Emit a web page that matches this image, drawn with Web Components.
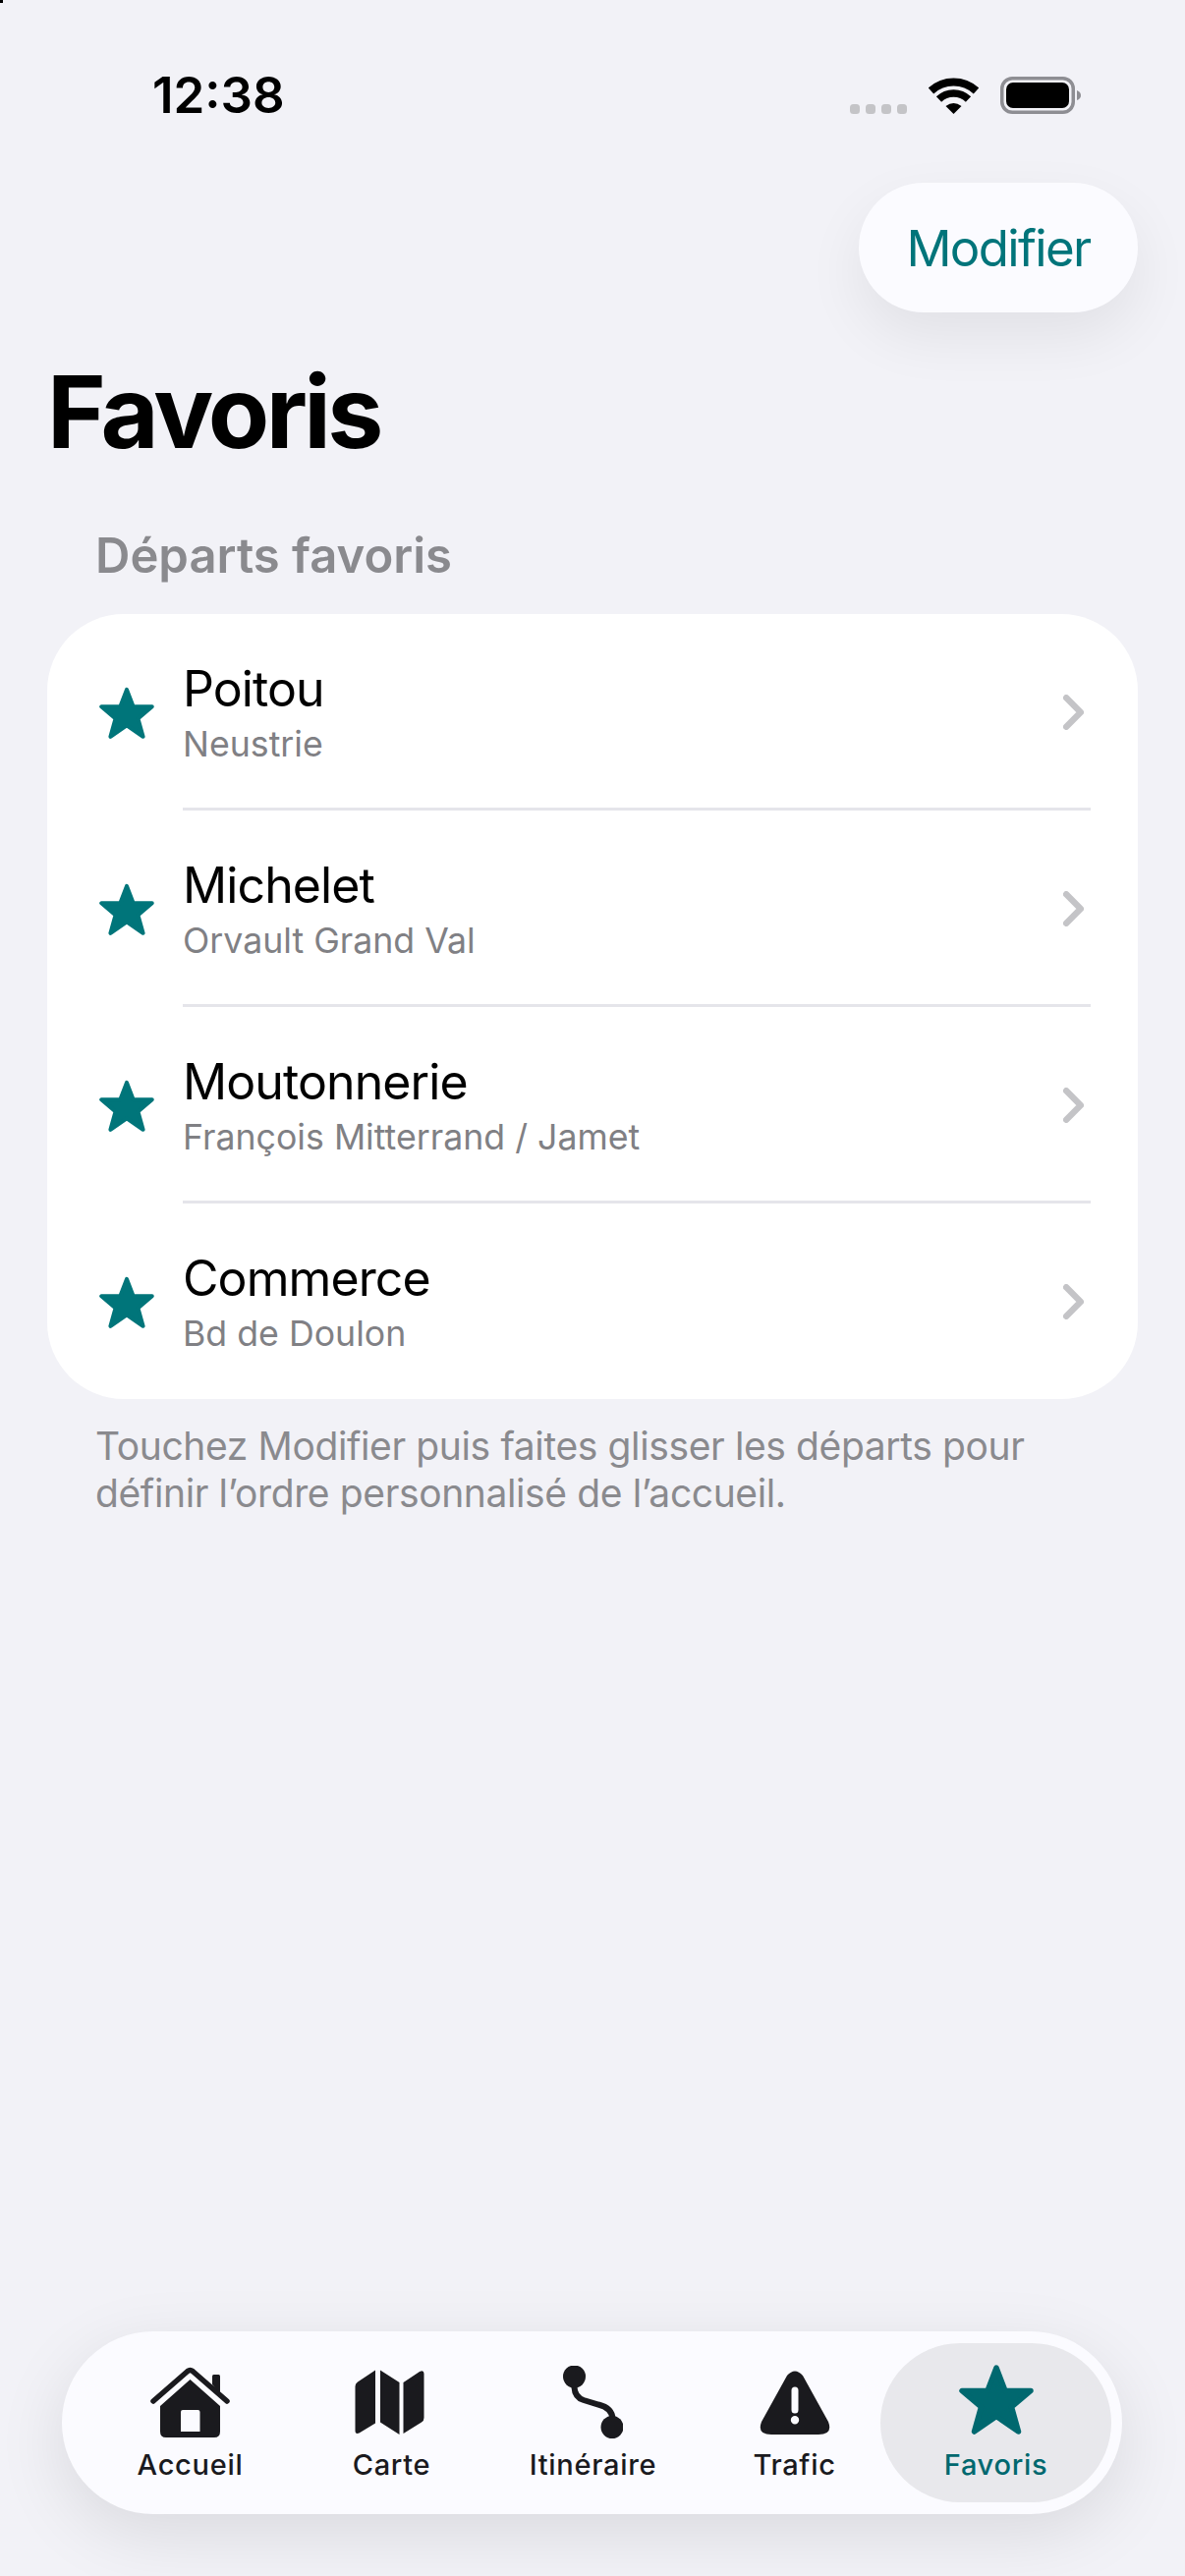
<!DOCTYPE html>
<html lang="fr">
<head>
<meta charset="utf-8">
<title>Favoris</title>
<style>
    html, body {
        margin: 0;
        padding: 0;
    }

    body {
        background-color: #f2f2f7;
        font-family: Inter, "Liberation Sans", sans-serif;
    }
</style>
</head>
<body>
<favorites-screen>
    <status-bar time="12:38"></status-bar>
    <nav-button>Modifier</nav-button>
    <large-title>Favoris</large-title>
    <section-header>Départs favoris</section-header>
    <favorites-list>
        <favorite-row>Poitou<span slot="sub">Neustrie</span></favorite-row>
        <favorite-row>Michelet<span slot="sub">Orvault Grand Val</span></favorite-row>
        <favorite-row>Moutonnerie<span slot="sub">François Mitterrand / Jamet</span></favorite-row>
        <favorite-row>Commerce<span slot="sub">Bd de Doulon</span></favorite-row>
    </favorites-list>
    <section-footer>Touchez Modifier puis faites glisser les départs pour définir l’ordre personnalisé de l’accueil.</section-footer>
    <tab-bar>
        <tab-item icon="home">Accueil</tab-item>
        <tab-item icon="map">Carte</tab-item>
        <tab-item icon="route">Itinéraire</tab-item>
        <tab-item icon="warning">Trafic</tab-item>
        <tab-item icon="star" active>Favoris</tab-item>
    </tab-bar>
</favorites-screen>

<script>
const STAR_POINTS = '38,4 47,27.5 73,27.5 53.5,44 60.5,69 38,53.5 15.5,69 22.5,44 3,27.5 29,27.5';

// map and star carry spare room so they sit off-centre like the originals
const ICONS = {
    home: `<svg width="81" height="72" viewBox="0 0 81 72">
        <path d="M3 35 L38 4.5 Q40.5 2.5 43 4.5 L78 35" fill="none" stroke="currentColor" stroke-width="5.5" stroke-linecap="round" stroke-linejoin="round"/>
        <path d="M63 18 V9.5 Q63 8 64.5 8 H69.5 Q71 8 71 9.5 V28 Z" fill="currentColor"/>
        <path fill-rule="evenodd" fill="currentColor" d="M40.5 13 L71 40 V66 Q71 72 65 72 H16 Q10 72 10 66 V40 Z M33 44 Q31 44 31 46 V66 H50.5 V46 Q50.5 44 48.5 44 Z"/>
    </svg>`,
    map: `<svg width="76" height="66" viewBox="0 0 76 66">
        <path fill="currentColor" d="M21 0.5 V54.5 L4.5 64.5 Q0.5 66 0.5 62 V17 Q0.5 14 3 12.5 Z"/>
        <path fill="currentColor" d="M26 0.5 L45.5 13 V66 L26 53.5 Z"/>
        <path fill="currentColor" d="M49.5 13 L66 2 Q70.5 0 70.5 4 V49 Q70.5 52 68 53.5 L49.5 65 Z"/>
    </svg>`,
    route: `<svg width="61" height="74" viewBox="0 0 61 74">
        <path d="M11.5 11 V22 Q12 32 21 35 L36 39.5 Q50 43 50.5 54 V62" fill="none" stroke="currentColor" stroke-width="6"/>
        <circle cx="11.5" cy="11" r="11.5" fill="currentColor"/>
        <circle cx="50" cy="62.5" r="11.5" fill="currentColor"/>
    </svg>`,
    warning: `<svg width="72" height="65" viewBox="0 0 72 65">
        <path fill-rule="evenodd" fill="currentColor" d="M28 5 Q36 -4 44 5 L70 52 Q75 65 60 65 H12 Q-3 65 2 52 Z M32.5 20 V40 Q32.5 43.5 36 43.5 Q39.5 43.5 39.5 40 V20 Q39.5 16.5 36 16.5 Q32.5 16.5 32.5 20 Z M36 46 A4.2 4.2 0 1 0 36 54.4 A4.2 4.2 0 1 0 36 46 Z"/>
    </svg>`,
    star: `<svg width="76" height="78" viewBox="0 0 76 78">
        <polygon points="${STAR_POINTS}" fill="currentColor" stroke="currentColor" stroke-width="5.5" stroke-linejoin="round"/>
    </svg>`,
};

class FavoritesScreen extends HTMLElement {
    constructor() {
        super();
        this.attachShadow({ mode: 'open' }).innerHTML = `
        <style>
        :host {
            display: flex;
            flex-direction: column;
            position: relative;
            box-sizing: border-box;
            height: 2622px;
            overflow: hidden;
            padding-bottom: 63px;
        }
        .corner {
            position: absolute;
            top: 0;
            left: 0;
            width: 3px;
            height: 3px;
            background-color: #000;
        }
        </style>
        <div class="corner"></div>
        <slot></slot>`;
    }
}

class StatusBar extends HTMLElement {
    constructor() {
        super();
        this.attachShadow({ mode: 'open' }).innerHTML = `
        <style>
        :host {
            display: flex;
            align-items: flex-start;
            justify-content: space-between;
            box-sizing: border-box;
            height: 186px;
            padding: 78px 106px 0 155px;
        }
        .time {
            font-size: 51px;
            line-height: 38px;
            font-weight: 600;
            color: #000;
        }
        .icons {
            display: flex;
            align-items: flex-end;
            gap: 22px;
        }
        .dots {
            display: flex;
            gap: 6px;
        }
        .dots i {
            width: 10px;
            height: 10px;
            border-radius: 3.5px;
            background-color: #c4c4c7;
        }
        svg {
            display: block;
        }
        </style>
        <div class="time">${this.getAttribute('time')}</div>
        <div class="icons">
            <div class="dots"><i></i><i></i><i></i><i></i></div>
            <svg width="51" height="38" viewBox="0 0 51 38">
                <path d="M2.5 14.5 A34 34 0 0 1 48.5 14.5" fill="none" stroke="#000" stroke-width="8"/>
                <path d="M10.5 23 A21.5 21.5 0 0 1 40.5 23" fill="none" stroke="#000" stroke-width="7.5"/>
                <path d="M17.5 30 Q25.5 24 33.5 30 L25.5 38 Z" fill="#000"/>
            </svg>
            <svg width="82" height="38" viewBox="0 0 82 38">
                <rect x="1.75" y="1.75" width="72.5" height="34.5" rx="10.5" fill="none" stroke="#8e8e93" stroke-width="3.5"/>
                <rect x="6" y="6" width="64" height="26" rx="7" fill="#000"/>
                <path d="M78 14 Q82 15.5 82 19 Q82 22.5 78 24 Z" fill="#8e8e93"/>
            </svg>
        </div>`;
    }
}

class NavButton extends HTMLElement {
    constructor() {
        super();
        this.attachShadow({ mode: 'open' }).innerHTML = `
        <style>
        :host {
            display: flex;
            justify-content: flex-end;
            padding: 0 48px 0 0;
        }
        button {
            box-sizing: border-box;
            width: 284px;
            height: 132px;
            border: none;
            border-radius: 66px;
            background-color: #fbfbff;
            box-shadow: 0 24px 60px rgba(0, 0, 0, 0.07);
            color: #00747a;
            font: 400 51px Inter, "Liberation Sans", sans-serif;
            letter-spacing: -1.65px;
            padding: 0;
        }
        </style>
        <button type="button"><slot></slot></button>`;
    }
}

class LargeTitle extends HTMLElement {
    constructor() {
        super();
        this.attachShadow({ mode: 'open' }).innerHTML = `
        <style>
        :host {
            display: block;
            margin: 39px 0 0;
            padding-left: 48px;
            font-size: 102px;
            line-height: 124px;
            font-weight: 700;
            letter-spacing: -3.7px;
            color: #000;
        }
        </style>
        <slot></slot>`;
    }
}

class SectionHeader extends HTMLElement {
    constructor() {
        super();
        this.attachShadow({ mode: 'open' }).innerHTML = `
        <style>
        :host {
            display: block;
            margin-top: 55px;
            padding-left: 97px;
            font-size: 49px;
            line-height: 60px;
            font-weight: 600;
            color: #8a8a8e;
        }
        </style>
        <slot></slot>`;
    }
}

class FavoritesList extends HTMLElement {
    constructor() {
        super();
        this.attachShadow({ mode: 'open' }).innerHTML = `
        <style>
        :host {
            display: block;
            margin: 29px 48px 0;
            border-radius: 78px;
            background-color: #fff;
            overflow: hidden;
        }
        </style>
        <slot></slot>`;
    }
}

class FavoriteRow extends HTMLElement {
    constructor() {
        super();
        this.attachShadow({ mode: 'open' }).innerHTML = `
        <style>
        :host {
            display: flex;
            align-items: center;
            box-sizing: border-box;
            height: 200px;
            padding: 0 55px 0 53px;
            position: relative;
        }
        :host(:last-child) {
            margin-bottom: -1px;
        }
        .star {
            display: block;
            width: 56px;
            height: 53px;
            margin-right: 29px;
            color: #00757a;
        }
        .text {
            flex: 1;
            display: flex;
            flex-direction: column;
        }
        .name {
            font-size: 50px;
            line-height: 58px;
            letter-spacing: -0.9px;
            color: #000;
        }
        .sub {
            margin-top: 5px;
            font-size: 35.7px;
            line-height: 44px;
            color: #808084;
        }
        .chevron {
            display: block;
        }
        .rule {
            position: absolute;
            left: 138px;
            right: 48px;
            bottom: 0;
            height: 3px;
            background-color: #e5e5ea;
        }
        :host(:last-child) .rule {
            display: none;
        }
        </style>
        <svg class="star" viewBox="0 0 76 72"><polygon points="${STAR_POINTS}" fill="currentColor" stroke="currentColor" stroke-width="5.5" stroke-linejoin="round"/></svg>
        <div class="text">
            <div class="name"><slot></slot></div>
            <div class="sub"><slot name="sub"></slot></div>
        </div>
        <svg class="chevron" width="21" height="36" viewBox="0 0 21 36">
            <path d="M3.2 3.2 L17.8 18 L3.2 32.8" fill="none" stroke="#c4c4c7" stroke-width="6.4" stroke-linecap="round" stroke-linejoin="round"/>
        </svg>
        <div class="rule"></div>`;
    }
}

class SectionFooter extends HTMLElement {
    constructor() {
        super();
        this.attachShadow({ mode: 'open' }).innerHTML = `
        <style>
        :host {
            display: block;
            margin-top: 24px;
            padding: 0 80px 0 97px;
            font-size: 39px;
            line-height: 48px;
            letter-spacing: -0.38px;
            color: #8a8a8e;
        }
        </style>
        <slot></slot>`;
    }
}

class TabBar extends HTMLElement {
    constructor() {
        super();
        this.attachShadow({ mode: 'open' }).innerHTML = `
        <style>
        :host {
            display: grid;
            grid-template-columns: repeat(5, 205px);
            box-sizing: border-box;
            width: 1079px;
            height: 186px;
            margin: auto 0 0 63px;
            padding: 12px 0 12px 28px;
            border-radius: 93px;
            background-color: #fbfbff;
            box-shadow: 0 20px 70px rgba(0, 0, 0, 0.1);
        }
        </style>
        <slot></slot>`;
    }
}

class TabItem extends HTMLElement {
    constructor() {
        super();
        const icon = ICONS[this.getAttribute('icon')];
        this.attachShadow({ mode: 'open' }).innerHTML = `
        <style>
        :host {
            display: flex;
            flex-direction: column;
            align-items: center;
            box-sizing: border-box;
            height: 162px;
            padding-top: 12px;
            color: #1a1a1e;
        }
        :host([active]) {
            margin: 0 -15px;
            border-radius: 81px;
            background-color: #e8e8ec;
            color: #00686f;
        }
        .icon {
            display: flex;
            align-items: center;
            justify-content: center;
            height: 96px;
        }
        svg {
            display: block;
        }
        .label {
            font-size: 29px;
            line-height: 31px;
            font-weight: 500;
            letter-spacing: 0.7px;
        }
        </style>
        <div class="icon">${icon}</div>
        <div class="label"><slot></slot></div>`;
    }
}

customElements.define('favorites-screen', FavoritesScreen);
customElements.define('status-bar', StatusBar);
customElements.define('nav-button', NavButton);
customElements.define('large-title', LargeTitle);
customElements.define('section-header', SectionHeader);
customElements.define('favorites-list', FavoritesList);
customElements.define('favorite-row', FavoriteRow);
customElements.define('section-footer', SectionFooter);
customElements.define('tab-bar', TabBar);
customElements.define('tab-item', TabItem);
</script>
</body>
</html>
